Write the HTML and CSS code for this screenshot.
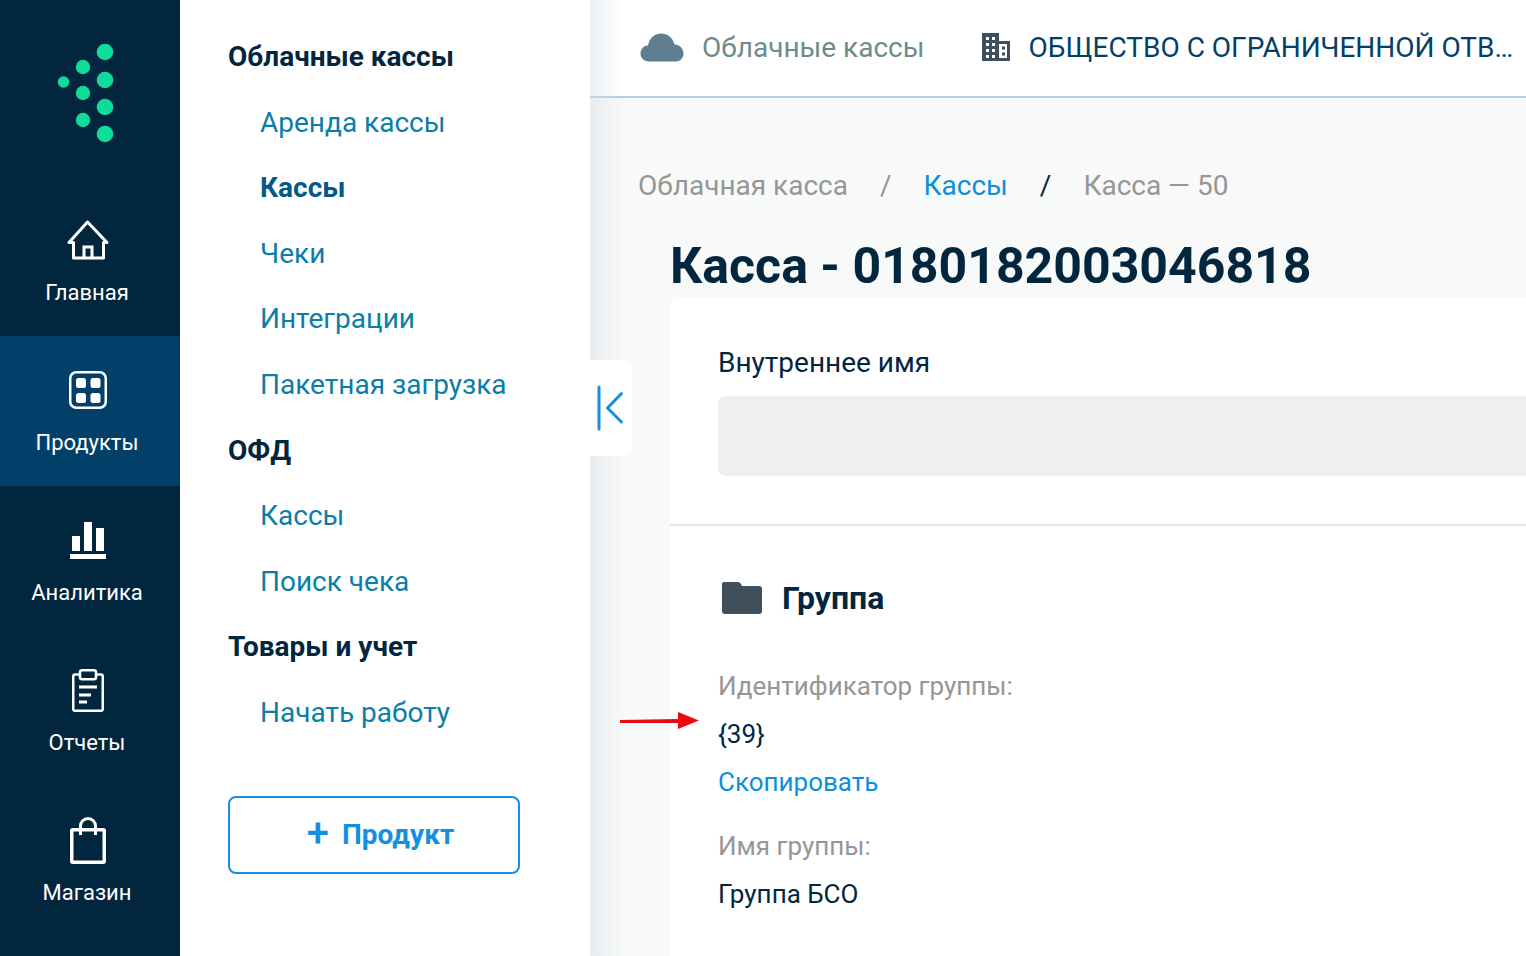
FILE: index.html
```html
<!DOCTYPE html>
<html lang="ru">
<head>
    <meta charset="UTF-8">
    <meta name="viewport" content="width=device-width, initial-scale=1.0">
    <title>Касса - 0180182003046818</title>
    <link rel="stylesheet" href="styles.css">
</head>
<body>
    <div class="container">
        <nav class="rail">
            <div class="rail-logo">
                <svg width="60" height="100" viewBox="0 0 60 100" fill="#0fdc9b">
                    <circle cx="48" cy="8" r="8.3"/><circle cx="48" cy="36" r="8.3"/><circle cx="48" cy="63" r="8.3"/><circle cx="48" cy="90" r="8.3"/>
                    <circle cx="26" cy="23" r="7.2"/><circle cx="26" cy="49" r="7.2"/><circle cx="26" cy="76" r="7.2"/>
                    <circle cx="6.500" cy="38" r="5.800"/>
                </svg>
            </div>
            <a class="rail-item">
                <svg width="44" height="50" viewBox="0 0 44 50" fill="none" stroke="#fff" stroke-width="3">
                    <path d="M22.500 6 L4 26.500 H8.500 V42 H38.500 V26.500 H42 Z" stroke-linejoin="round"/>
                    <path d="M19 42 V31 H27 V42"/>
                </svg>
                <span>Главная</span>
            </a>
            <a class="rail-item active">
                <svg width="44" height="50" viewBox="0 0 44 50" fill="#fff">
                    <rect x="5.250" y="6.250" width="35.500" height="35.500" rx="6" fill="none" stroke="#fff" stroke-width="2.500"/>
                    <rect x="11" y="12" width="10" height="10" rx="2.500"/><rect x="25.500" y="12" width="10" height="10" rx="2.500"/>
                    <rect x="11" y="27" width="10" height="10" rx="2.500"/><rect x="25.500" y="27" width="10" height="10" rx="2.500"/>
                </svg>
                <span>Продукты</span>
            </a>
            <a class="rail-item">
                <svg width="44" height="50" viewBox="0 0 44 50" fill="#fff">
                    <rect x="7" y="20" width="8" height="15"/><rect x="19" y="6" width="8" height="29"/><rect x="31" y="12" width="8" height="23"/>
                    <rect x="5" y="38" width="36" height="5"/>
                </svg>
                <span>Аналитика</span>
            </a>
            <a class="rail-item">
                <svg width="44" height="50" viewBox="0 0 44 50" fill="none" stroke="#fff" stroke-width="2.500">
                    <path d="M14 8.500 H10 Q8.250 8.500 8.250 10.500 V43 Q8.250 44.750 10 44.750 H36 Q37.750 44.750 37.750 43 V10.500 Q37.750 8.500 36 8.500 H32"/>
                    <rect x="15" y="4.250" width="16" height="9" rx="2"/>
                    <path d="M14 21 H32 M14 29 H26 M14 36 H22" stroke-width="3"/>
                </svg>
                <span>Отчеты</span>
            </a>
            <a class="rail-item">
                <svg width="44" height="50" viewBox="0 0 44 50" fill="none" stroke="#fff" stroke-width="3.500">
                    <rect x="6.750" y="13.750" width="32.500" height="32.500" rx="1" stroke-linejoin="round"/>
                    <path d="M15.500 19 V10 A7.500 7.500 0 0 1 30.500 10 V19" stroke-width="3"/>
                </svg>
                <span>Магазин</span>
            </a>
        </nav>

        <aside class="sidebar">
            <div class="side-title">Облачные кассы</div>
            <a class="side-link">Аренда кассы</a>
            <a class="side-link current">Кассы</a>
            <a class="side-link">Чеки</a>
            <a class="side-link">Интеграции</a>
            <a class="side-link">Пакетная загрузка</a>
            <div class="side-title">ОФД</div>
            <a class="side-link">Кассы</a>
            <a class="side-link">Поиск чека</a>
            <div class="side-title">Товары и учет</div>
            <a class="side-link">Начать работу</a>
            <button class="add-btn"><span class="plus">+</span> Продукт</button>
        </aside>

        <div class="main">
            <header class="topbar">
                <svg class="cloud" width="44" height="30" viewBox="0 0 44 30" fill="#5f7f90">
                    <path d="M9 29.500 C3.500 29.500 .5 25.500 .5 21.500 C.5 17 4 13.500 8 13.500 C9.500 5.500 15 1.500 21 1.500 C28 1.500 33 6 34.500 12.500 C40 12.500 43.500 17 43.500 21.500 C43.500 26 40 29.500 36 29.500 Z"/>
                </svg>
                <span class="top-product">Облачные кассы</span>
                <svg class="building" width="30" height="30" viewBox="0 0 30 30" fill="#3f4f5b">
                    <path fill-rule="evenodd" d="M1 1 H18 V9 H29 V29 H1 Z M5 5 V8 H8 V5 Z M11 5 V8 H14 V5 Z M5 11 V14 H8 V11 Z M11 11 V14 H14 V11 Z M5 17 V20 H8 V17 Z M11 17 V20 H14 V17 Z M5 23 V26 H8 V23 Z M11 23 V26 H14 V23 Z M18 12 V26 H26 V12 Z"/>
                    <rect x="21" y="14.500" width="3" height="3"/><rect x="21" y="20.500" width="3" height="3"/>
                </svg>
                <span class="top-org">ОБЩЕСТВО С ОГРАНИЧЕННОЙ ОТВ…</span>
            </header>

            <div class="content">
                <div class="breadcrumbs">
                    <span>Облачная касса</span>
                    <span class="sep">/</span>
                    <a>Кассы</a>
                    <span class="sep dark">/</span>
                    <span>Касса — 50</span>
                </div>
                <h1>Касса - 0180182003046818</h1>
                <div class="card">
                    <section class="name-block">
                        <div class="name-label">Внутреннее имя</div>
                        <div class="name-input"></div>
                    </section>
                    <section class="group-block">
                        <div class="group-head">
                            <svg width="42" height="34" viewBox="0 0 42 34" fill="#3f4f5b">
                                <path d="M3 1 H17 Q19 1 20 3 L21 5 H38 Q41 5 41 8 V30 Q41 33 38 33 H4 Q1 33 1 30 V3 Q1 1 3 1 Z"/>
                            </svg>
                            <h2>Группа</h2>
                        </div>
                        <div class="field-label">Идентификатор группы:</div>
                        <div class="field-value">{39}</div>
                        <a class="copy">Скопировать</a>
                        <div class="field-label second">Имя группы:</div>
                        <div class="field-value">Группа БСО</div>
                    </section>
                </div>
            </div>

            <div class="collapse">
                <svg width="28" height="48" viewBox="0 0 28 48" fill="none" stroke="#1590e0" stroke-width="3" stroke-linecap="round" stroke-linejoin="round">
                    <path d="M2 2 V44"/>
                    <path d="M24.500 8.500 L10.500 23 L24.500 37"/>
                </svg>
            </div>
            <svg class="arrow" width="80" height="20" viewBox="0 0 80 20" fill="#ea0a12">
                <path d="M0 9 L58 8 V1 L79 9.500 L58 18 V12 L0 12 Z"/>
            </svg>
        </div>
    </div>
</body>
</html>
```

FILE: styles.css
```css
* {
    box-sizing: border-box;
}
body {
    margin: 0;
    height: 100vh;
    overflow: hidden;
    font-family: Roboto, "Noto Sans", sans-serif;
    color: #03263f;
}
.container {
    display: flex;
    width: 100%;
    height: 100%;
}

/* left dark rail */
.rail {
    width: 180px;
    flex: none;
    background-color: #03263f;
    color: white;
}
.rail-logo {
    height: 186px;
    padding: 44px 0 0 57px;
}
.rail-item {
    display: flex;
    flex-direction: column;
    align-items: center;
    height: 150px;
    padding: 30px 6px 0 0;
    font-size: 22px;
    line-height: 26px;
}
.rail-item svg {
    margin-bottom: 14px;
}
.rail-item.active {
    background-color: #023f69;
}

/* second column */
.sidebar {
    width: 410px;
    flex: none;
    background-color: white;
    padding: 24px 0 0 48px;
    display: flex;
    flex-direction: column;
    align-items: flex-start;
    position: relative;
    z-index: 2;
}
.side-title {
    font-size: 28px;
    font-weight: 700;
    line-height: 65.6px;
    height: 65.6px;
}
.side-link {
    font-size: 28px;
    line-height: 65.6px;
    height: 65.6px;
    padding-left: 32px;
    color: #0a7ea8;
}
.side-link.current {
    font-weight: 700;
    color: #035a88;
}
.add-btn {
    width: 292px;
    height: 78px;
    margin-top: 50px;
    padding: 0 0 2px 13px;
    background: white;
    border: 2px solid #1590e0;
    border-radius: 8px;
    color: #1590e0;
    font-family: inherit;
    font-size: 28px;
    font-weight: 700;
}
.plus {
    font-size: 40px;
    font-weight: 500;
    line-height: 1;
    margin-right: 6px;
    vertical-align: -3px;
}

/* main part */
.main {
    flex: 1;
    min-width: 0;
    position: relative;
    background-color: #f8f9f9;
    overflow: hidden;
}
.main::before {
    content: "";
    position: absolute;
    top: 0;
    bottom: 0;
    left: 0;
    width: 34px;
    background: linear-gradient(to right, rgba(205, 218, 226, 0.4), rgba(205, 218, 226, 0));
    z-index: 1;
}
.topbar {
    display: flex;
    align-items: center;
    height: 98px;
    padding: 0 0 2px 50px;
    background-color: white;
    border-bottom: 2px solid #b4cfe0;
}
.top-product {
    font-size: 28px;
    color: #6f8a8c;
    margin-left: 18px;
    margin-right: 56px;
    white-space: nowrap;
}
.top-org {
    font-size: 28px;
    color: #023f69;
    margin-left: 18px;
    white-space: nowrap;
}
.cloud, .building {
    flex: none;
}
.content {
    padding: 71px 0 0 48px;
}
.breadcrumbs {
    display: flex;
    font-size: 28px;
    line-height: 34px;
    color: #969696;
}
.breadcrumbs a {
    color: #0d8fdb;
}
.sep {
    margin: 0 32px;
}
.sep.dark {
    color: #03263f;
}
h1 {
    margin: 33px 0 0 32px;
    font-size: 50px;
    line-height: 60px;
    font-weight: 700;
}
.card {
    margin: 2px 0 0 32px;
    background-color: white;
    border-radius: 8px 0 0 0;
    height: 700px;
}
.name-block {
    padding: 48px 48px 48px;
    border-bottom: 2px solid #e8e8e8;
    height: 228px;
}
.name-label {
    font-size: 28px;
    line-height: 34px;
    margin-bottom: 16px;
}
.name-input {
    height: 80px;
    background-color: #efefef;
    border-radius: 8px 0 0 8px;
    margin-right: -48px;
}
.group-block {
    padding: 53px 48px 0;
}
.group-head {
    display: flex;
    align-items: center;
    gap: 19px;
    margin-bottom: 45px;
}
.group-head svg {
    margin-left: 3px;
}
h2 {
    margin: 0;
    font-size: 32px;
    line-height: 38px;
    font-weight: 700;
}
.field-label {
    font-size: 26px;
    line-height: 48px;
    color: #969696;
}
.field-label.second {
    margin-top: 16px;
}
.field-value {
    font-size: 26px;
    line-height: 48px;
}
.copy {
    display: block;
    font-size: 26px;
    line-height: 48px;
    color: #0d8fdb;
}

/* things on top */
.collapse {
    position: absolute;
    left: 0;
    top: 360px;
    width: 42px;
    height: 96px;
    padding: 25px 0 0 7px;
    background-color: white;
    border-radius: 0 8px 8px 0;
    z-index: 2;
}
.arrow {
    position: absolute;
    left: 30px;
    top: 711px;
    z-index: 3;
}
```
